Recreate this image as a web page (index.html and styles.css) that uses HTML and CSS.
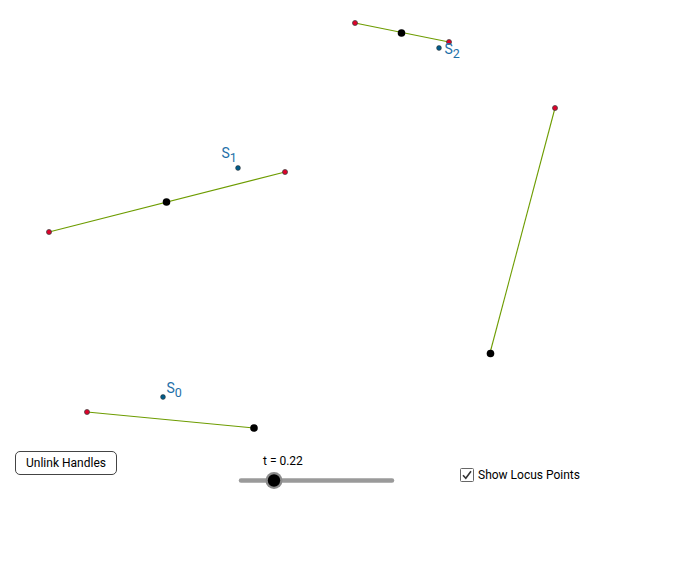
FILE: index.html
```html
<!DOCTYPE html>
<html>
<head>
<meta charset="utf-8">
<link rel="stylesheet" href="styles.css">
</head>
<body>
<div class="applet">
  <svg class="canvas" width="680" height="570" viewBox="0 0 680 570">
    <g class="seg">
      <line x1="355" y1="23" x2="449" y2="42"/>
      <line x1="49" y1="232" x2="285" y2="172"/>
      <line x1="555" y1="108" x2="490" y2="353"/>
      <line x1="87" y1="412" x2="254" y2="428"/>
    </g>
    <g class="red">
      <circle cx="355" cy="23" r="2.5"/>
      <circle cx="449" cy="42" r="2.5"/>
      <circle cx="49" cy="232" r="2.5"/>
      <circle cx="285" cy="172" r="2.5"/>
      <circle cx="555" cy="108" r="2.5"/>
      <circle cx="87" cy="412" r="2.5"/>
    </g>
    <g class="black">
      <circle cx="401.5" cy="33" r="3.8"/>
      <circle cx="166.5" cy="202" r="3.8"/>
      <circle cx="490.5" cy="353.5" r="3.8"/>
      <circle cx="254" cy="428" r="3.8"/>
    </g>
    <g class="blue">
      <circle cx="439" cy="48" r="2.4"/>
      <circle cx="238" cy="168" r="2.4"/>
      <circle cx="163" cy="397" r="2.4"/>
    </g>
    <g class="label">
      <text x="444.5" y="54">S<tspan class="sub" dy="4">2</tspan></text>
      <text x="221.5" y="158">S<tspan class="sub" dy="4">1</tspan></text>
      <text x="166.5" y="393">S<tspan class="sub" dy="4">0</tspan></text>
    </g>
    <g class="slider">
      <line class="track" x1="241" y1="480.5" x2="392" y2="480.5"/>
      <circle class="halo" cx="274" cy="480.5" r="8.5"/>
      <circle class="knob" cx="274" cy="480.5" r="6.2"/>
      <text class="slabel" x="263" y="465">t = 0.22</text>
    </g>
  </svg>
  <button class="unlink">Unlink Handles</button>
  <label class="locus">
    <span class="box">
      <svg width="14" height="14" viewBox="0 0 14 14"><rect x="0.5" y="0.5" width="13" height="13" rx="1" fill="#fff" stroke="#666"/><path d="M3 7.2 L5.8 10.3 L11 3.2" fill="none" stroke="#333" stroke-width="1.6"/></svg>
    </span>
    <span class="ltext">Show Locus Points</span>
  </label>
</div>
</body>
</html>
```
FILE: styles.css
```css
html, body {
  margin: 0;
  padding: 0;
  background: #fff;
}
.applet {
  position: relative;
  width: 680px;
  height: 570px;
  overflow: hidden;
  font-family: Roboto, "Liberation Sans", sans-serif;
}
.canvas {
  display: block;
}
.seg line {
  stroke: #6d9c00;
  stroke-width: 1.1;
}
.red circle {
  fill: #e0002a;
  stroke: #444;
  stroke-width: 0.8;
}
.black circle {
  fill: #000;
}
.blue circle {
  fill: #005c8a;
  stroke: #333;
  stroke-width: 0.6;
}
.label text {
  fill: #1e6fa8;
  font-family: Roboto, "Liberation Sans", sans-serif;
  font-size: 14px;
}
.label .sub {
  font-size: 12.5px;
}
.track {
  stroke: #9a9a9a;
  stroke-width: 4.5;
  stroke-linecap: round;
}
.halo {
  fill: #8c8c8c;
}
.knob {
  fill: #000;
}
.slabel {
  font-family: Roboto, "Liberation Sans", sans-serif;
  font-size: 12px;
  fill: #000;
}
.unlink {
  position: absolute;
  left: 15px;
  top: 451px;
  width: 102px;
  height: 24px;
  padding: 0;
  background: #fff;
  border: 1px solid #444;
  border-radius: 5px;
  font-family: Roboto, "Liberation Sans", sans-serif;
  font-size: 12px;
  color: #000;
}
.locus {
  position: absolute;
  left: 460px;
  top: 468px;
  display: flex;
  align-items: center;
  gap: 4px;
  font-size: 12px;
  color: #000;
}
.box {
  display: flex;
}
```
